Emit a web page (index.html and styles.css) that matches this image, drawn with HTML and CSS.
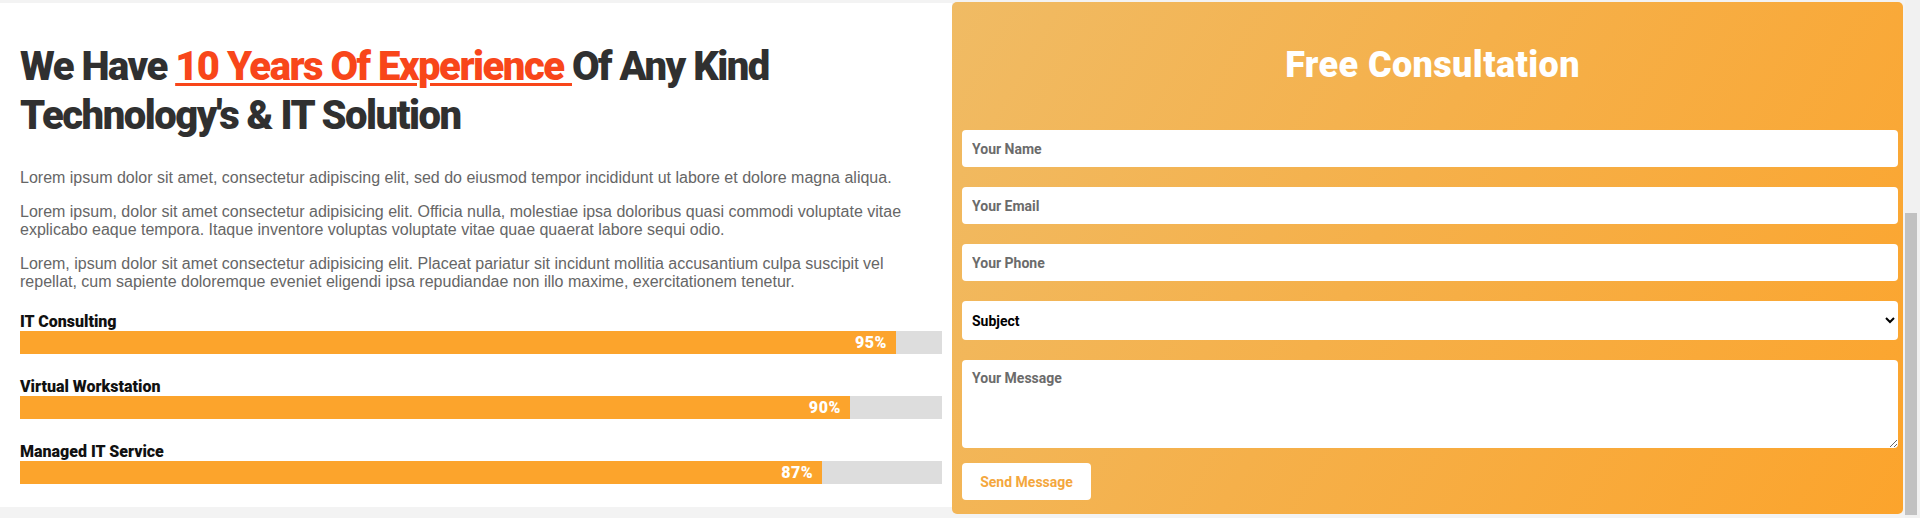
FILE: index.html
```html
<!DOCTYPE html>
<html lang="en">
<head>
<meta charset="utf-8">
<title>Experience</title>
<link rel="stylesheet" href="styles.css">
</head>
<body>
<div class="page">
  <section class="about">
    <h1 class="about-title">We Have <span class="accent">10 Years Of Experience </span>Of Any Kind Technology's &amp; IT Solution</h1>
    <p class="about-text">Lorem ipsum dolor sit amet, consectetur adipiscing elit, sed do eiusmod tempor incididunt ut labore et dolore magna aliqua.</p>
    <p class="about-text">Lorem ipsum, dolor sit amet consectetur adipisicing elit. Officia nulla, molestiae ipsa doloribus quasi commodi voluptate vitae explicabo eaque tempora. Itaque inventore voluptas voluptate vitae quae quaerat labore sequi odio.</p>
    <p class="about-text">Lorem, ipsum dolor sit amet consectetur adipisicing elit. Placeat pariatur sit incidunt mollitia accusantium culpa suscipit vel repellat, cum sapiente doloremque eveniet eligendi ipsa repudiandae non illo maxime, exercitationem tenetur.</p>
    <div class="skills">
      <div class="skill">
        <div class="skill-name">IT Consulting</div>
        <div class="skill-track"><div class="skill-fill" style="width:95%">95%</div></div>
      </div>
      <div class="skill">
        <div class="skill-name">Virtual Workstation</div>
        <div class="skill-track"><div class="skill-fill" style="width:90%">90%</div></div>
      </div>
      <div class="skill">
        <div class="skill-name">Managed IT Service</div>
        <div class="skill-track"><div class="skill-fill" style="width:87%">87%</div></div>
      </div>
    </div>
  </section>
  <aside class="consult">
    <h2 class="consult-title">Free Consultation</h2>
    <form class="consult-form">
      <input class="field" type="text" placeholder="Your Name">
      <input class="field" type="email" placeholder="Your Email">
      <input class="field" type="text" placeholder="Your Phone">
      <select class="field field-select">
        <option>Subject</option>
        <option>IT Consulting</option>
        <option>Virtual Workstation</option>
        <option>Managed IT Service</option>
      </select>
      <textarea class="field field-area" placeholder="Your Message"></textarea>
      <button class="send" type="button">Send Message</button>
    </form>
  </aside>
  <div class="scrollbar"><div class="scrollbar-thumb"></div></div>
</div>
</body>
</html>
```
FILE: styles.css
```css
* { box-sizing: border-box; }
html, body { margin: 0; padding: 0; }
body {
  background: #f3f3f3;
  height: 518px;
  overflow: hidden;
  font-family: Roboto, "Liberation Sans", Arial, sans-serif;
}
.page {
  display: flex;
  align-items: flex-start;
  height: 518px;
}
.about {
  width: 952px;
  height: 504px;
  margin-top: 3px;
  background: #ffffff;
  padding: 39px 10px 0 20px;
}
.about-title {
  margin: 0 0 29px;
  font-size: 40px;
  line-height: 49px;
  font-weight: 900;
  letter-spacing: -1.5px;
  color: #303030;
}
.accent {
  color: #f8461a;
  text-decoration: underline;
  text-decoration-thickness: 3px;
  text-underline-offset: 3px;
}
.about-text {
  margin: 0 0 16px;
  font-family: "Liberation Sans", Arial, sans-serif;
  font-size: 16px;
  line-height: normal;
  color: #666666;
}
.skills {
  margin-top: 21px;
  display: flex;
  flex-direction: column;
  gap: 23px;
}
.skill-name {
  font-size: 16px;
  font-weight: 900;
  line-height: 19px;
  color: #111111;
}
.skill-track {
  height: 23px;
  background: #dddddd;
}
.skill-fill {
  height: 23px;
  background: #fca42c;
  color: #ffffff;
  font-size: 16px;
  font-weight: 900;
  letter-spacing: 0.5px;
  line-height: 23px;
  text-align: right;
  padding-right: 9px;
}
.consult {
  width: 951px;
  height: 512px;
  margin-top: 2px;
  border-radius: 5px;
  background: linear-gradient(120deg, #f0bb64 0%, #f5b04a 45%, #fca42c 100%);
  padding: 42px 5px 0 10px;
}
.consult-title {
  margin: 0 0 43px;
  text-align: center;
  color: #ffffff;
  font-size: 36px;
  line-height: 43px;
  font-weight: 900;
  letter-spacing: 0.4px;
  padding-left: 5px;
}
.consult-form {
  display: flex;
  flex-direction: column;
  align-items: flex-start;
}
.field {
  display: block;
  width: 100%;
  height: 37px;
  margin: 0 0 20px;
  border: 0;
  border-radius: 4px;
  background: #ffffff;
  padding: 0 10px;
  font-family: Roboto, "Liberation Sans", Arial, sans-serif;
  font-size: 14px;
  font-weight: 700;
  color: #111111;
  outline: none;
}
.field::placeholder {
  color: #6b6b6b;
  opacity: 1;
}
.field-select {
  height: 39px;
  padding: 0 6px;
  color: #000000;
}
.field-area {
  height: 88px;
  margin-bottom: 15px;
  padding: 10px;
  resize: both;
}
.send {
  width: 129px;
  height: 37px;
  border: 0;
  border-radius: 4px;
  background: #ffffff;
  color: #f4a73d;
  font-family: Roboto, "Liberation Sans", Arial, sans-serif;
  font-size: 14px;
  font-weight: 700;
  padding: 0;
}
.scrollbar {
  margin-left: 2px;
  width: 15px;
  height: 518px;
  background: #f1f1f1;
  padding-top: 213px;
}
.scrollbar-thumb {
  width: 12px;
  height: 302px;
  background: #c1c1c1;
}
```
